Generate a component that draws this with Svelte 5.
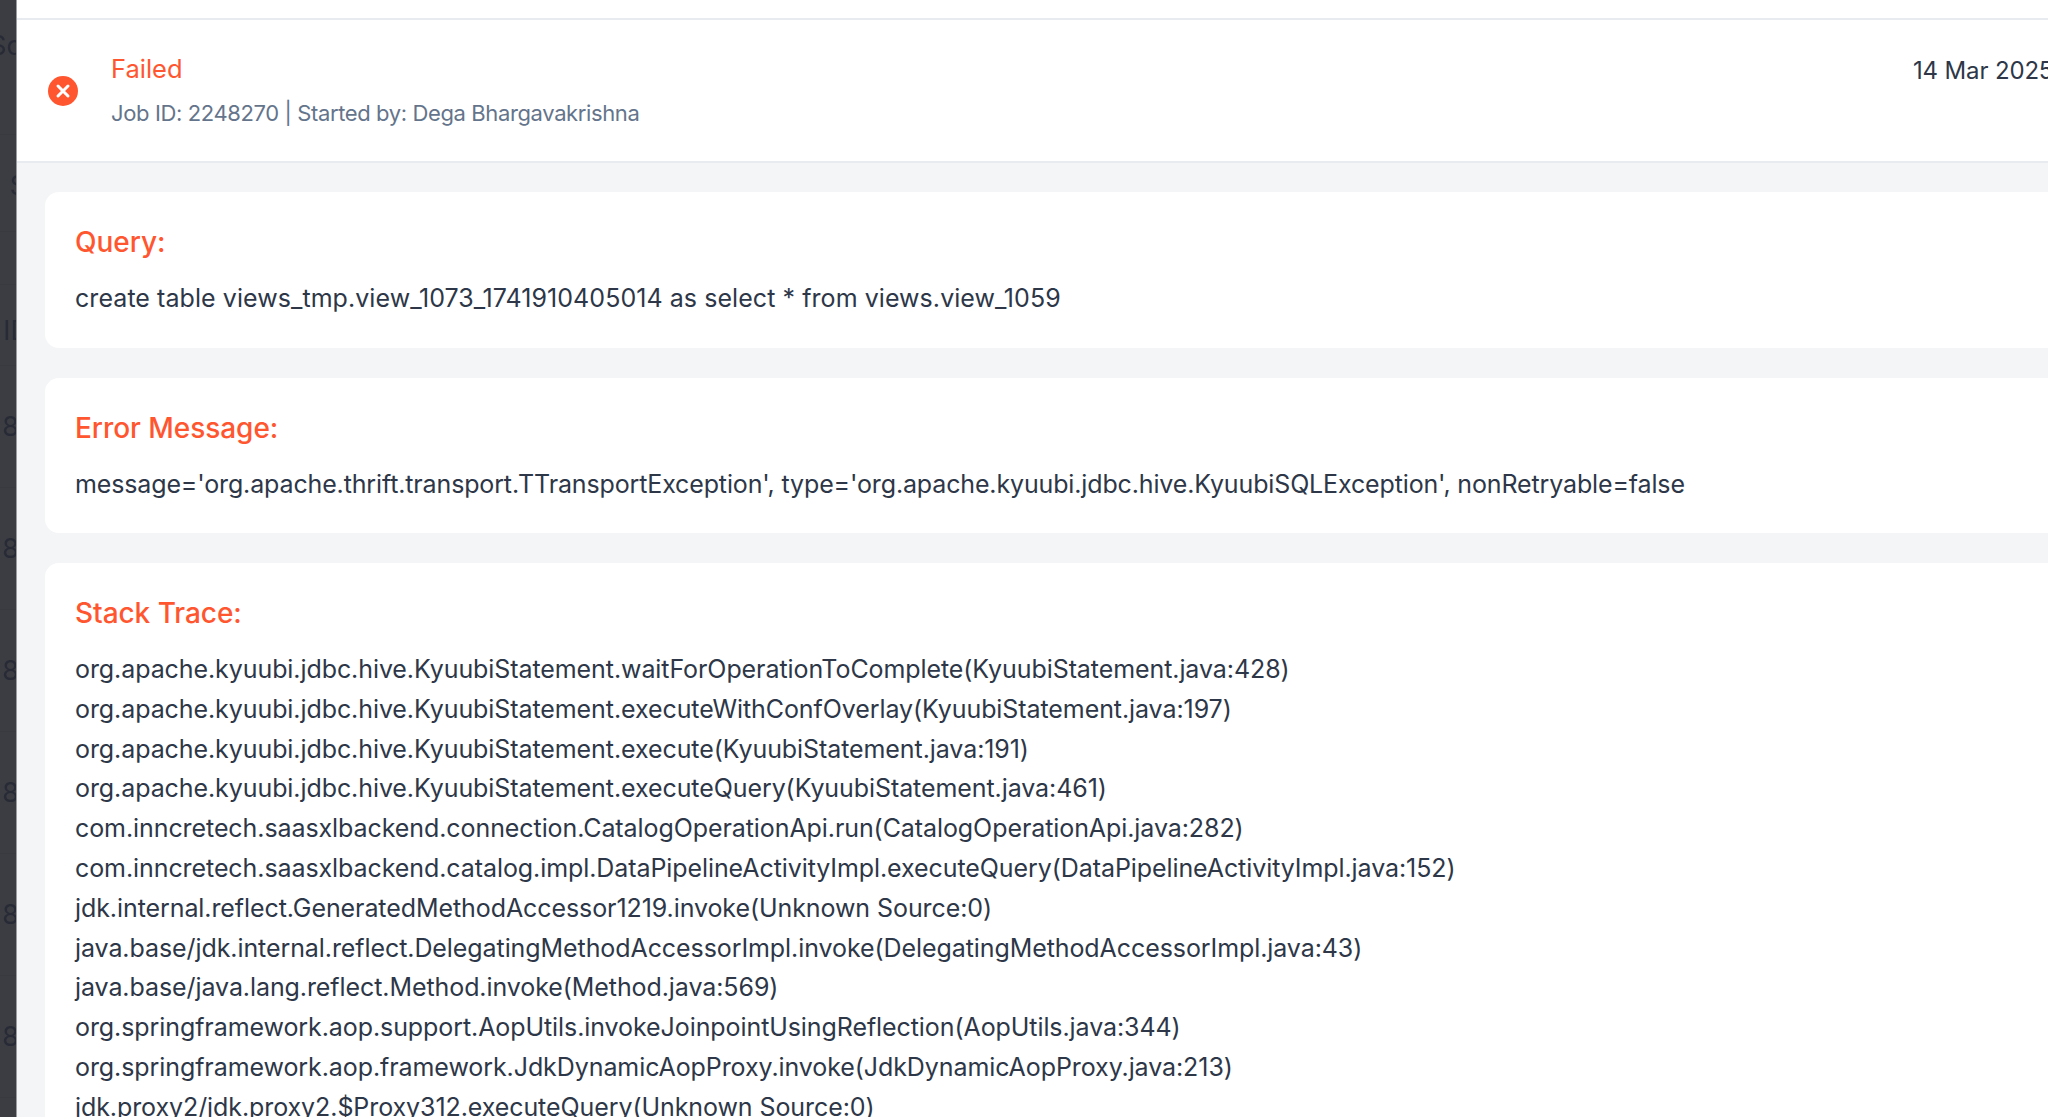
<script>
  const lines = [
    "org.apache.kyuubi.jdbc.hive.KyuubiStatement.waitForOperationToComplete(KyuubiStatement.java:428)",
    "org.apache.kyuubi.jdbc.hive.KyuubiStatement.executeWithConfOverlay(KyuubiStatement.java:197)",
    "org.apache.kyuubi.jdbc.hive.KyuubiStatement.execute(KyuubiStatement.java:191)",
    "org.apache.kyuubi.jdbc.hive.KyuubiStatement.executeQuery(KyuubiStatement.java:461)",
    "com.inncretech.saasxlbackend.connection.CatalogOperationApi.run(CatalogOperationApi.java:282)",
    "com.inncretech.saasxlbackend.catalog.impl.DataPipelineActivityImpl.executeQuery(DataPipelineActivityImpl.java:152)",
    "jdk.internal.reflect.GeneratedMethodAccessor1219.invoke(Unknown Source:0)",
    "java.base/jdk.internal.reflect.DelegatingMethodAccessorImpl.invoke(DelegatingMethodAccessorImpl.java:43)",
    "java.base/java.lang.reflect.Method.invoke(Method.java:569)",
    "org.springframework.aop.support.AopUtils.invokeJoinpointUsingReflection(AopUtils.java:344)",
    "org.springframework.aop.framework.JdkDynamicAopProxy.invoke(JdkDynamicAopProxy.java:213)",
    "jdk.proxy2/jdk.proxy2.$Proxy312.executeQuery(Unknown Source:0)"
  ];
  const eights = [0, 1, 2, 3, 4, 5];
</script>

<div class="page">
  <aside class="strip">
    <div class="row r1"><span class="cut">Sc</span></div>
    <div class="row r2"><span class="cut2">S</span></div>
    <div class="row r3"></div>
    <div class="row r4"><span class="cut3">ID</span></div>
    {#each eights as n (n)}<div class="row r8"><span class="cut8">-8</span></div>{/each}
  </aside>
  <main class="panel">
    <div class="topbar"></div>
    <header class="head">
      <svg class="icon" viewBox="0 0 30 30" aria-hidden="true">
        <circle cx="15" cy="15" r="15" fill="#ff5630" />
        <path d="M10 10l10 10M20 10L10 20" stroke="#fff" stroke-width="3" stroke-linecap="round" fill="none" />
      </svg>
      <div class="status">
        <div class="failed">Failed</div>
        <div class="sub">Job ID: 2248270 | Started by: Dega Bhargavakrishna</div>
      </div>
      <div class="date">14 Mar 2025</div>
    </header>
    <div class="body">
      <section class="card">
        <h3>Query:</h3>
        <p class="wide">create table views_tmp.view_1073_1741910405014 as select * from views.view_1059</p>
      </section>
      <section class="card">
        <h3>Error Message:</h3>
        <p class="tight">message='org.apache.thrift.transport.TTransportException', type='org.apache.kyuubi.jdbc.hive.KyuubiSQLException', nonRetryable=false</p>
      </section>
      <section class="card">
        <h3>Stack Trace:</h3>
        {#each lines as l}<p>{l}</p>{/each}
      </section>
    </div>
  </main>
</div>

<style>
  :global(body) { margin: 0; overflow: hidden; background: #f4f5f7; }
  .page { display: flex; width: 2048px; height: 1117px; overflow: hidden; font-family: Inter, "Liberation Sans", sans-serif; }
  .strip { width: 16px; flex: none; background: #3b3d43; overflow: hidden; display: flex; flex-direction: column; font-size: 27px; color: #282b35; box-shadow: 1px 0 0 #9a9ca0; z-index: 1; }
  .row { flex: none; display: flex; align-items: center; justify-content: flex-end; box-sizing: border-box; border-bottom: 1px solid #383a40; white-space: nowrap; filter: blur(0.5px); }
  .r1 { height: 135px; align-items: flex-start; padding-top: 29px; }
  .r2 { height: 97px; align-items: flex-start; padding-top: 34px; }
  .r3 { height: 53px; }
  .r4 { height: 81px; padding-top: 10px; }
  .r8 { height: 122px; }
  .cut { margin-right: -6px; }
  .cut2 { margin-right: -11px; }
  .cut3 { margin-right: -14px; }
  .cut8 { margin-right: -5px; letter-spacing: 2px; }
  .panel { flex: none; width: 2200px; background: #f4f5f7; }
  .topbar { height: 18px; background: #fff; border-bottom: 2px solid #e8ebef; }
  .head { height: 143px; box-sizing: border-box; background: #fff; border-bottom: 2px solid #e8ebef; display: flex; align-items: center; padding-left: 32px; position: relative; }
  .icon { width: 30px; height: 30px; flex: none; }
  .status { margin-left: 33px; }
  .failed { font-size: 25.5px; line-height: 30px; color: #ff5630; }
  .sub { font-size: 22px; line-height: 30px; margin-top: 14px; letter-spacing: -0.38px; color: #64748b; }
  .date { position: absolute; left: 1897px; top: 36px; font-size: 24px; line-height: 30px; letter-spacing: -0.15px; color: #2d3748; white-space: nowrap; }
  .body { padding: 29px 0 0 29px; display: flex; flex-direction: column; gap: 30px; }
  .card { background: #fff; border-radius: 14px; padding: 32px 30px 28px; min-height: 155.5px; box-sizing: border-box; }
  h3 { margin: 0 0 19px; font-size: 28px; line-height: 36px; font-weight: 550; letter-spacing: -0.05px; color: #ff5630; }
  p { margin: 0; font-size: 25px; line-height: 39.8px; letter-spacing: -0.08px; color: #2d3748; white-space: nowrap; }
  .wide { letter-spacing: 0.06px; }
  .tight { letter-spacing: -0.14px; }
</style>
